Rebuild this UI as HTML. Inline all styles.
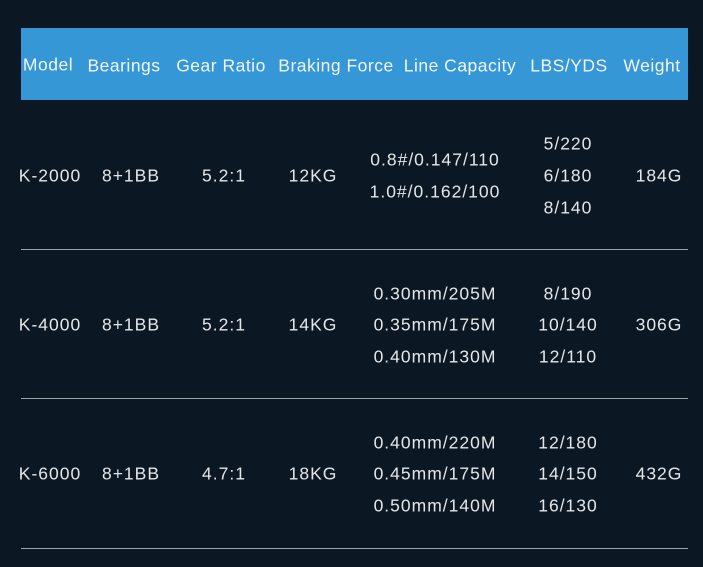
<!DOCTYPE html>
<html><head><meta charset="utf-8"><style>
html,body{margin:0;padding:0}
body{width:703px;height:567px;background:#0b1824;position:relative;overflow:hidden;font-family:"Liberation Sans","DejaVu Sans",sans-serif;color:#e4e6e8;font-size:17.5px;letter-spacing:1px}
.hdr{position:absolute;left:21px;top:28px;width:667px;height:72px;background:#3597d6}
.t{position:absolute;transform:translate(-50%,-50%);white-space:nowrap;line-height:1}
.h{color:#f2f6fa;font-size:17.5px;letter-spacing:0.5px}
.ln{position:absolute;left:21px;width:667px;height:1px;background:#9ea3a8}
</style></head><body>
<div class="hdr"></div>
<div class="t h" style="left:48px;top:65px">Model</div>
<div class="t h" style="left:124px;top:66px">Bearings</div>
<div class="t h" style="left:221px;top:66px">Gear Ratio</div>
<div class="t h" style="left:336px;top:66px">Braking Force</div>
<div class="t h" style="left:460px;top:66px">Line Capacity</div>
<div class="t h" style="left:569px;top:66px">LBS/YDS</div>
<div class="t h" style="left:652px;top:66px">Weight</div>

<div class="t" style="left:50px;top:176px">K-2000</div>
<div class="t" style="left:131px;top:176px">8+1BB</div>
<div class="t" style="left:224px;top:176px">5.2:1</div>
<div class="t" style="left:313px;top:176px">12KG</div>
<div class="t" style="left:435px;top:160px">0.8#/0.147/110</div>
<div class="t" style="left:435px;top:192px">1.0#/0.162/100</div>
<div class="t" style="left:568px;top:144px">5/220</div>
<div class="t" style="left:568px;top:176px">6/180</div>
<div class="t" style="left:568px;top:208px">8/140</div>
<div class="t" style="left:659px;top:176px">184G</div>
<div class="ln" style="top:249px"></div>

<div class="t" style="left:50px;top:325px">K-4000</div>
<div class="t" style="left:131px;top:325px">8+1BB</div>
<div class="t" style="left:224px;top:325px">5.2:1</div>
<div class="t" style="left:313px;top:325px">14KG</div>
<div class="t" style="left:435px;top:294px">0.30mm/205M</div>
<div class="t" style="left:435px;top:325px">0.35mm/175M</div>
<div class="t" style="left:435px;top:357px">0.40mm/130M</div>
<div class="t" style="left:568px;top:294px">8/190</div>
<div class="t" style="left:568px;top:325px">10/140</div>
<div class="t" style="left:568px;top:357px">12/110</div>
<div class="t" style="left:659px;top:325px">306G</div>
<div class="ln" style="top:398px"></div>

<div class="t" style="left:50px;top:474px">K-6000</div>
<div class="t" style="left:131px;top:474px">8+1BB</div>
<div class="t" style="left:224px;top:474px">4.7:1</div>
<div class="t" style="left:313px;top:474px">18KG</div>
<div class="t" style="left:435px;top:443px">0.40mm/220M</div>
<div class="t" style="left:435px;top:474px">0.45mm/175M</div>
<div class="t" style="left:435px;top:506px">0.50mm/140M</div>
<div class="t" style="left:568px;top:443px">12/180</div>
<div class="t" style="left:568px;top:474px">14/150</div>
<div class="t" style="left:568px;top:506px">16/130</div>
<div class="t" style="left:659px;top:474px">432G</div>
<div class="ln" style="top:548px"></div>
</body></html>
